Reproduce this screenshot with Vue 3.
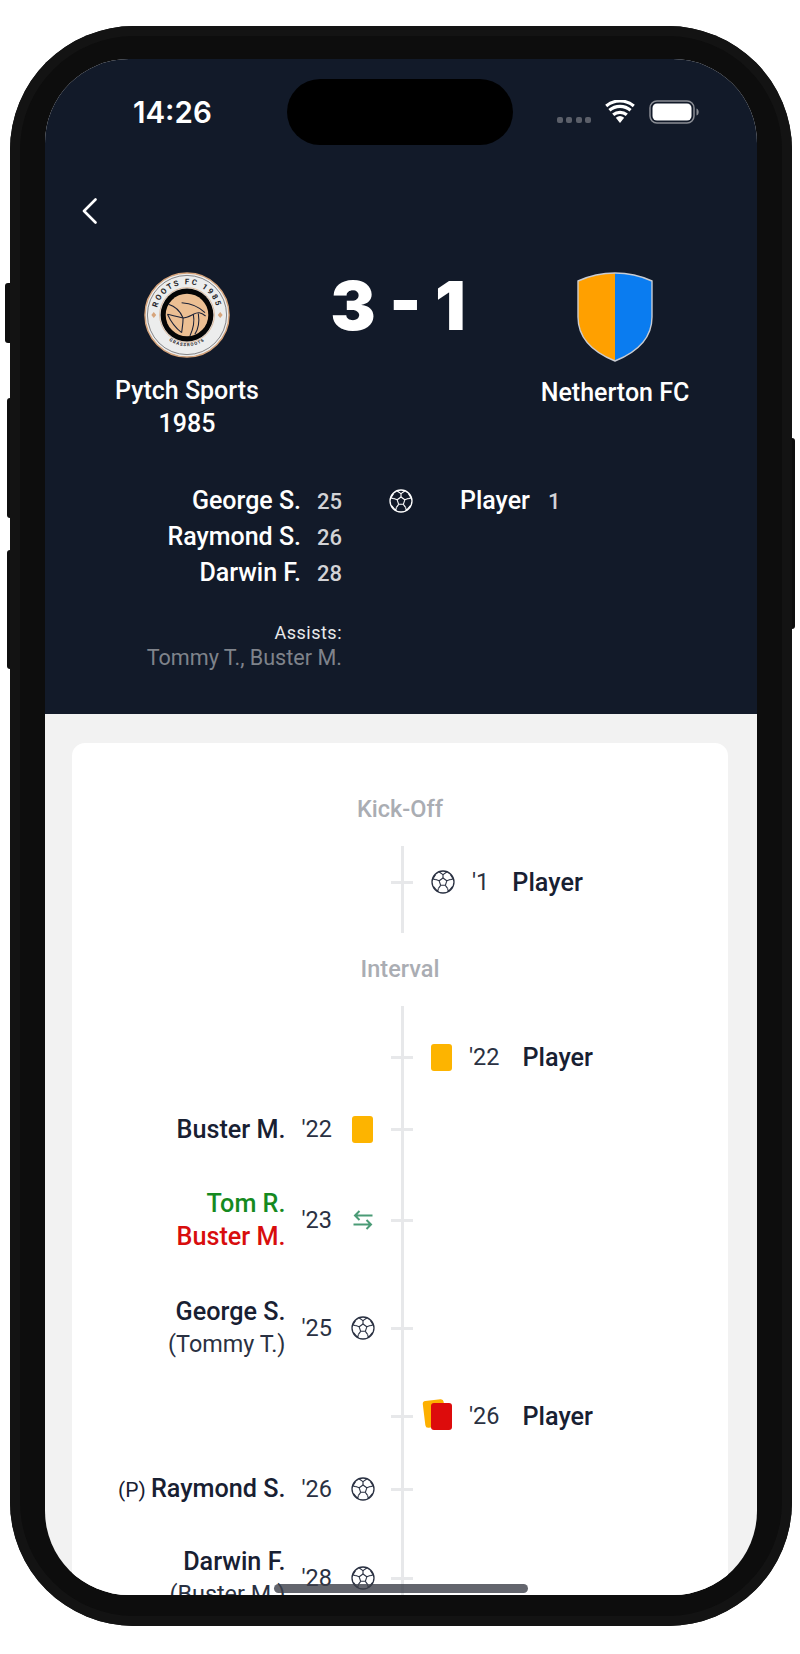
<template>
  <div class="page">
    <div class="phone">
      <span class="side-btn left mute"></span>
      <span class="side-btn left vol-up"></span>
      <span class="side-btn left vol-down"></span>
      <span class="side-btn right power"></span>

      <svg width="0" height="0" class="defs">
        <symbol id="ball" viewBox="0 0 24 24">
          <circle cx="12" cy="12" r="11" fill="none" stroke="currentColor" stroke-width="1.300" />
          <path d="M12 8l3.800 2.800-1.450 4.500h-4.700L8.200 10.800z" fill="none" stroke="currentColor" stroke-width="1.100" stroke-linejoin="round" />
          <path d="M12 8V4.600M15.800 10.800l3.400-1.200M14.350 15.300l2.200 3M9.650 15.300l-2.200 3M8.200 10.800L4.800 9.600" fill="none" stroke="currentColor" stroke-width="1.100" />
          <path d="M8.200 2L12 4.600 15.800 2M19.200 9.600l3-.6-2.700-4.400M16.550 18.300l.8 3.200 4.300-5.200M7.450 18.300l-.8 3.200-4.300-5.200M4.800 9.600L1.800 9l2.700-4.400" fill="none" stroke="currentColor" stroke-width="1.100" stroke-linejoin="round" />
        </symbol>
      </svg>

      <div class="screen">
        <header class="match">
          <div class="status">
            <span class="time">14:26</span>
            <div class="status-icons">
              <span class="signal"><i v-for="n in 4" :key="n"></i></span>
              <svg class="wifi" viewBox="0 0 30 23">
                <path d="M15 23l-4.200-5.200a6.500 6.500 0 0 1 8.400 0z" fill="#fff" />
                <path d="M8.200 14.800a10.500 10.500 0 0 1 13.600 0" fill="none" stroke="#fff" stroke-width="3.200" />
                <path d="M4.400 10.200a16.300 16.300 0 0 1 21.200 0" fill="none" stroke="#fff" stroke-width="3.200" />
                <path d="M1.200 6a21.500 21.500 0 0 1 27.600 0" fill="none" stroke="#fff" stroke-width="3.200" />
              </svg>
              <svg class="battery" viewBox="0 0 50 24">
                <rect x="1" y="1" width="44" height="22" rx="7" fill="none" stroke="#8a8d94" stroke-width="1.500" />
                <rect x="3.500" y="3.500" width="39" height="17" rx="4.500" fill="#fff" />
                <path d="M47.500 8.500c1.500.5 2.200 2 2.200 3.500s-.7 3-2.200 3.500z" fill="#8a8d94" />
              </svg>
            </div>
          </div>

          <svg class="back" viewBox="0 0 15 26"><path d="M13.500 1.500L2 13l11.500 11.500" fill="none" stroke="#fff" stroke-width="2.600" stroke-linecap="round" stroke-linejoin="round" /></svg>

          <div class="score-row">
            <div class="team home">
              <svg class="crest" viewBox="0 0 88 88">
                <defs>
                  <path id="arcTop" d="M14.500 54.700A31.400 31.400 0 1 1 73.500 54.700" />
                  <path id="arcBottom" d="M17.600 62A32 32 0 0 0 70.400 62" />
                </defs>
                <circle cx="44" cy="44" r="43" fill="#eceded" stroke="#d7a57c" stroke-width="1.500" />
                <circle cx="44" cy="44" r="40.500" fill="none" stroke="#3b3b3f" stroke-width=".6" />
                <circle cx="44" cy="44" r="28" fill="none" stroke="#d7a57c" stroke-width=".7" />
                <circle cx="44" cy="44" r="27" fill="#050505" />
                <circle cx="44" cy="44" r="21.800" fill="#ecbf93" />
                <g fill="none" stroke="#1a2036" stroke-width="1.100">
                  <path d="M25 33C32 35 37 40 40 47M38.500 31.400C46 32 56 35 62.400 41.600" />
                  <path d="M40 47C44 47 47 45 50.500 43.300M50.500 43.300C55 41 58 41 63 45" />
                  <path d="M24 43.300C28 52 33 58 38.500 62M40 47C34 46 28 44 24 43.300M40 47C40 53 39 58 38.500 62" />
                  <path d="M50.500 43.300C52 51 50 59 47 65.500M55.600 42.500C57 52 56 58 52 63.800" />
                </g>
                <text class="crest-top" fill="#27272b"><textPath href="#arcTop" startOffset="50%" text-anchor="middle">ROOTS FC 1985</textPath></text>
                <text class="crest-bottom" fill="#27272b"><textPath href="#arcBottom" startOffset="50%" text-anchor="middle">GRASSROOTS</textPath></text>
                <path d="M10 41l2.500 3-2.500 3-2.500-3zM78 41l2.500 3-2.500 3-2.500-3z" fill="#d7a57c" />
              </svg>
              <div class="team-name">Pytch Sports<br />1985</div>
            </div>
            <div class="score">3 - 1</div>
            <div class="team away">
              <svg class="shield" viewBox="0 0 76 90">
                <path d="M38 1C25 1 12 4 1 9v36c0 22 17 36 37 44z" fill="#ffa000" />
                <path d="M38 1c13 0 26 3 37 8v36c0 22-17 36-37 44z" fill="#0a7cf0" />
                <path d="M38 1c13 0 26 3 37 8v36c0 22-17 36-37 44C18 81 1 67 1 45V9C12 4 25 1 38 1z" fill="none" stroke="#c9ccd2" stroke-width="1.400" />
              </svg>
              <div class="team-name">Netherton FC</div>
            </div>
          </div>

          <div class="scorers">
            <div class="scorers-home">
              <div v-for="g in homeGoals" :key="g.name" class="scorer">
                <span class="scorer-name">{{ g.name }}</span><span class="scorer-min">{{ g.min }}</span>
              </div>
            </div>
            <svg class="scorers-ball"><use href="#ball" /></svg>
            <div class="scorer away-scorer">
              <span class="scorer-name">Player</span><span class="scorer-min">1</span>
            </div>
          </div>

          <div class="assists">
            <div class="assists-label">Assists:</div>
            <div class="assists-names">Tommy T., Buster M.</div>
          </div>
        </header>

        <main class="body">
          <section class="card">
            <div class="period first">Kick-Off</div>
            <div class="events short">
              <div v-for="e in firstHalf" :key="e.id" class="event" :style="{ height: e.h + 'px' }">
                <div class="side home-side"></div>
                <div class="tick"></div>
                <div class="side away-side">
                  <svg class="ball"><use href="#ball" /></svg>
                  <span class="min">'{{ e.min }}</span>
                  <span class="player">{{ e.name }}</span>
                </div>
              </div>
            </div>

            <div class="period">Interval</div>
            <div class="events">
              <div v-for="e in secondHalf" :key="e.id" class="event" :style="{ height: e.h + 'px' }">
                <div class="side home-side">
                  <template v-if="e.side === 'home'">
                    <div class="names">
                      <template v-if="e.type === 'sub'">
                        <div class="sub-on">{{ e.on }}</div>
                        <div class="sub-off">{{ e.off }}</div>
                      </template>
                      <template v-else>
                        <div class="player"><span v-if="e.pen" class="pen">(P) </span>{{ e.name }}</div>
                        <div v-if="e.assist" class="assist">({{ e.assist }})</div>
                      </template>
                    </div>
                    <span class="min">'{{ e.min }}</span>
                    <span class="icon-slot">
                      <span v-if="e.type === 'yellow'" class="card-icon yellow"></span>
                      <svg v-else-if="e.type === 'sub'" class="swap" viewBox="0 0 20 20">
                        <path d="M19.500 5.500H2M6.500 1L2 5.500 6.500 10M.5 14.500H18M13.500 10l4.500 4.500-4.500 4.500" fill="none" stroke="#4a9b76" stroke-width="2" />
                      </svg>
                      <svg v-else class="ball"><use href="#ball" /></svg>
                    </span>
                  </template>
                </div>
                <div class="tick"></div>
                <div class="side away-side">
                  <template v-if="e.side === 'away'">
                    <span v-if="e.type === 'yellow'" class="card-icon yellow"></span>
                    <span v-else class="double-card"><i class="back-card"></i><i class="front-card"></i></span>
                    <span class="min">'{{ e.min }}</span>
                    <span class="player">{{ e.name }}</span>
                  </template>
                </div>
              </div>
            </div>
          </section>
        </main>

        <div class="island"></div>
        <div class="home-bar"></div>
      </div>
    </div>
  </div>
</template>

<script setup>
const homeGoals = [
  { name: 'George S.', min: 25 },
  { name: 'Raymond S.', min: 26 },
  { name: 'Darwin F.', min: 28 }
]

const firstHalf = [{ id: 1, min: 1, name: 'Player', h: 72 }]

const secondHalf = [
  { id: 1, side: 'away', type: 'yellow', min: 22, name: 'Player', h: 72 },
  { id: 2, side: 'home', type: 'yellow', min: 22, name: 'Buster M.', h: 72 },
  { id: 3, side: 'home', type: 'sub', min: 23, on: 'Tom R.', off: 'Buster M.', h: 110 },
  { id: 4, side: 'home', type: 'goal', min: 25, name: 'George S.', assist: 'Tommy T.', h: 106 },
  { id: 5, side: 'away', type: 'red', min: 26, name: 'Player', h: 70 },
  { id: 6, side: 'home', type: 'goal', min: 26, name: 'Raymond S.', pen: true, h: 76 },
  { id: 7, side: 'home', type: 'goal', min: 28, name: 'Darwin F.', assist: 'Buster M.', h: 102 }
]
</script>

<style>
html,body{margin:0;background:#fff}
</style>

<style scoped>
.page{width:800px;height:1654px;padding-top:26px;box-sizing:border-box;overflow:hidden;background:#fff;font-family:Roboto,"Liberation Sans",sans-serif}
.phone{position:relative;box-sizing:border-box;width:782px;height:1600px;margin-left:10px;padding:33px 35px 31px 35px;background:#0d0d0d;border-radius:124px;box-shadow:inset 0 0 0 10px #131313}
.defs{position:absolute}
.side-btn{position:absolute;background:#0e0e0e}
.side-btn.left{border-radius:3px 0 0 3px}
.side-btn.right{right:-3px;width:3px;border-radius:0 3px 3px 0}
.mute{left:-5px;width:5px;top:257px;height:60px}
.vol-up{left:-3px;width:3px;top:372px;height:120px}
.vol-down{left:-3px;width:3px;top:524px;height:119px}
.power{top:412px;height:191px}

.screen{position:relative;height:100%;display:flex;flex-direction:column;overflow:hidden;background:#f2f2f2;border-radius:84px}
.match{flex:none;box-sizing:border-box;height:655px;background:#121a29;color:#fff}
.status{display:flex;justify-content:space-between;align-items:flex-start;height:66px;padding:35px 58px 0 88px;box-sizing:border-box}
.time{font:600 29.500px/36px Inter,sans-serif}
.status-icons{display:flex;align-items:flex-start;padding-top:6px}
.signal{display:flex;gap:3.500px;margin:17px 14px 0 0}
.signal i{width:6px;height:6px;border-radius:2px;background:#5b5f69}
.wifi{width:30px;height:23px;margin-right:14px}
.battery{width:50px;height:24px}
.back{display:block;width:15px;height:26px;margin:73px 0 0 37px}

.score-row{display:grid;grid-template-columns:284px 144px 1fr;margin-top:48px}
.team{display:flex;flex-direction:column;align-items:center}
.crest{width:86px;height:86px;display:block}
.crest-top{font:700 8px Roboto,sans-serif;letter-spacing:2px}
.crest-bottom{font:700 4.500px Roboto,sans-serif;letter-spacing:1px}
.team-name{margin-top:16px;font-size:25px;font-weight:500;line-height:33px;text-align:center;white-space:nowrap}
.score{font:900 68px/70px Inter,sans-serif;text-align:center;white-space:nowrap;margin:-2px 6px 0 0}
.shield{width:76px;height:90px;display:block}
.away .team-name{margin-top:14px}

.scorers{display:flex;align-items:flex-start;margin-top:43px}
.scorers-home{width:297px;flex:none}
.scorer{display:flex;justify-content:flex-end;align-items:baseline;height:36px;line-height:36px}
.scorer-name{font-size:25px;font-weight:500}
.scorer-min{width:41px;text-align:right;font-size:22px;font-weight:500;color:#d2d3d6}
.scorers-ball{width:24px;height:24px;margin:6px 0 0 47px;color:#fff}
.away-scorer{margin-left:47px;justify-content:flex-start}
.away-scorer .scorer-min{width:auto;margin-left:18px}
.assists{width:297px;margin-top:29px;text-align:right}
.assists-label{font-size:18px;line-height:25px;letter-spacing:.5px;color:#e8e9eb}
.assists-names{font-size:21.600px;line-height:25px;color:#7f838b}

.body{flex:1;min-height:0;padding:29px 29px 0 27px}
.card{height:100%;background:#fff;border-radius:13px 13px 0 0}
.period{margin-top:21px;text-align:center;font-size:23.500px;font-weight:500;line-height:30px;color:#aaadb3}
.period.first{margin-top:0;padding-top:51px}
.events{position:relative;margin-top:22px;padding-top:15px}
.events.short{padding:0 0 15px}
.events::before{content:"";position:absolute;left:329px;top:0;bottom:0;width:3px;background:#e7e8ea}
.event{display:grid;grid-template-columns:319px 22px 1fr;align-items:center;color:#182032}
.tick{height:3px;background:#e7e8ea;position:relative}
.side{display:flex;align-items:center;min-width:0}
.home-side{justify-content:flex-end;padding-right:16px}
.away-side{padding-left:18px}
.names{text-align:right;line-height:33px}
.player{font-size:25.200px;font-weight:500;color:#182032;white-space:nowrap}
.pen{font-size:21px;font-weight:400}
.assist{font-size:23.400px;font-weight:400;color:#2a3142;white-space:nowrap}
.sub-on,.sub-off{font-size:25.200px;font-weight:500;white-space:nowrap}
.sub-on{color:#158a1f}
.sub-off{color:#d80d0d}
.min{font-size:23.500px;color:#2a3142;white-space:nowrap}
.home-side .min{margin-left:16px}
.icon-slot{width:24px;margin-left:19px;display:flex;justify-content:center}
.icon-slot .card-icon{margin-right:2px}
.away-side .min{margin:0 23px 0 17px}
.ball{width:24px;height:24px;display:block;color:#2a3142}
.card-icon{display:block;flex:none;width:21px;height:27px;border-radius:3px}
.yellow{background:#fdb400}
.swap{width:20px;height:20px;display:block}
.double-card{position:relative;display:block;flex:none;width:21px;height:27px}
.double-card i{position:absolute;display:block;width:21px;height:27px;border-radius:3px}
.back-card{left:-7px;top:-3px;background:#fdb000;transform:rotate(-7deg)}
.front-card{left:0;top:0;background:#dd0c0c}

.island{position:absolute;left:242px;top:20px;width:226px;height:66px;border-radius:33px;background:#000}
.home-bar{position:absolute;left:229px;bottom:2px;width:254px;height:9px;border-radius:5px;background:rgba(60,62,72,.8)}
</style>
